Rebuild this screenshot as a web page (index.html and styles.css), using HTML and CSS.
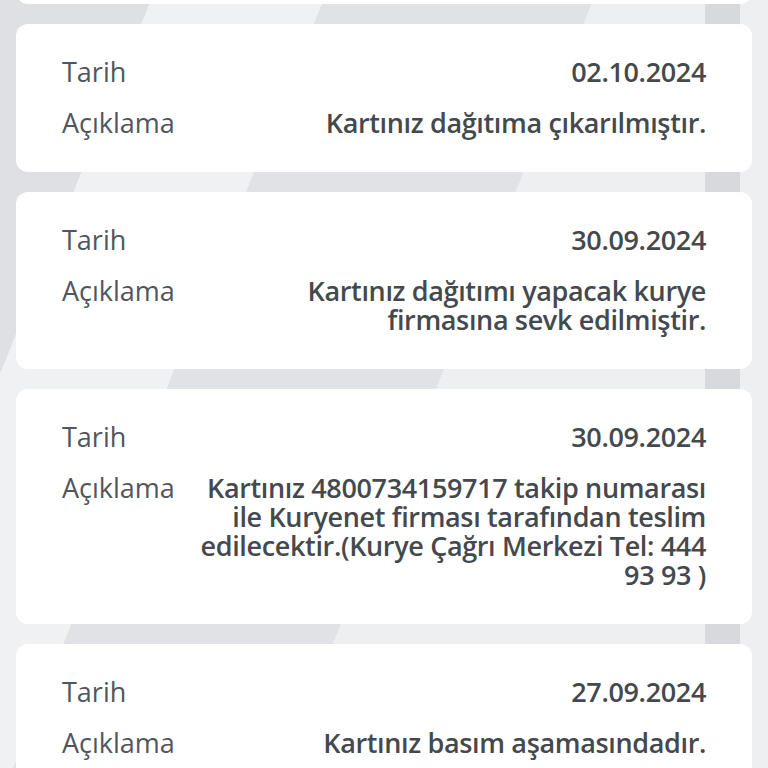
FILE: index.html
```html
<!DOCTYPE html>
<html lang="tr">
<head>
    <meta charset="UTF-8">
    <meta name="viewport" content="width=device-width, initial-scale=1.0">
    <title>Kart Takip</title>
    <link rel="stylesheet" href="styles.css">
</head>
<body>
    <div class="history">
        <!-- previous entry, scrolled off above -->
        <div class="card card-prev"></div>

        <div class="card">
            <div class="label">Tarih</div>
            <div class="value">02.10.2024</div>
            <div class="label">Açıklama</div>
            <div class="value">Kartınız dağıtıma çıkarılmıştır.</div>
        </div>

        <div class="card">
            <div class="label">Tarih</div>
            <div class="value">30.09.2024</div>
            <div class="label">Açıklama</div>
            <div class="value">Kartınız dağıtımı yapacak kurye firmasına sevk edilmiştir.</div>
        </div>

        <div class="card">
            <div class="label">Tarih</div>
            <div class="value">30.09.2024</div>
            <div class="label">Açıklama</div>
            <div class="value">Kartınız 4800734159717 takip numarası ile Kuryenet firması tarafından teslim edilecektir.(Kurye Çağrı Merkezi Tel: 444 93 93 )</div>
        </div>

        <div class="card">
            <div class="label">Tarih</div>
            <div class="value">27.09.2024</div>
            <div class="label">Açıklama</div>
            <div class="value">Kartınız basım aşamasındadır.</div>
        </div>
    </div>
</body>
</html>
```

FILE: styles.css
```css
html, body {
    height: 100%;
}
body {
    margin: 0;
    overflow: hidden;
    font-family: "Open Sans", "Liberation Sans", sans-serif;
    background-color: #e8e9eb;
    background-image:
        linear-gradient(90deg, transparent 0 705px, #d8d9dc 705px 740px, transparent 740px),
        linear-gradient(112deg, #dfe0e3 0 14%, #f0f1f2 14% 30%, #e1e2e5 30% 55%, #eeeff0 55% 100%);
}
.history {
    display: flex;
    flex-direction: column;
    gap: 20px;
    padding: 0 16px;
}
.card {
    display: grid;
    grid-template-columns: auto 1fr;
    column-gap: 16px;
    row-gap: 22px;
    background-color: #fff;
    border-radius: 12px;
    padding: 33px 46px 35px;
    font-size: 27px;
    line-height: 29px;
}
.card-prev {
    height: 80px;
    margin-top: -144px;
}
.label {
    color: #50565c;
    font-weight: 400;
}
.value {
    color: #44494e;
    font-weight: 600;
    letter-spacing: -0.35px;
    text-align: right;
}
```
